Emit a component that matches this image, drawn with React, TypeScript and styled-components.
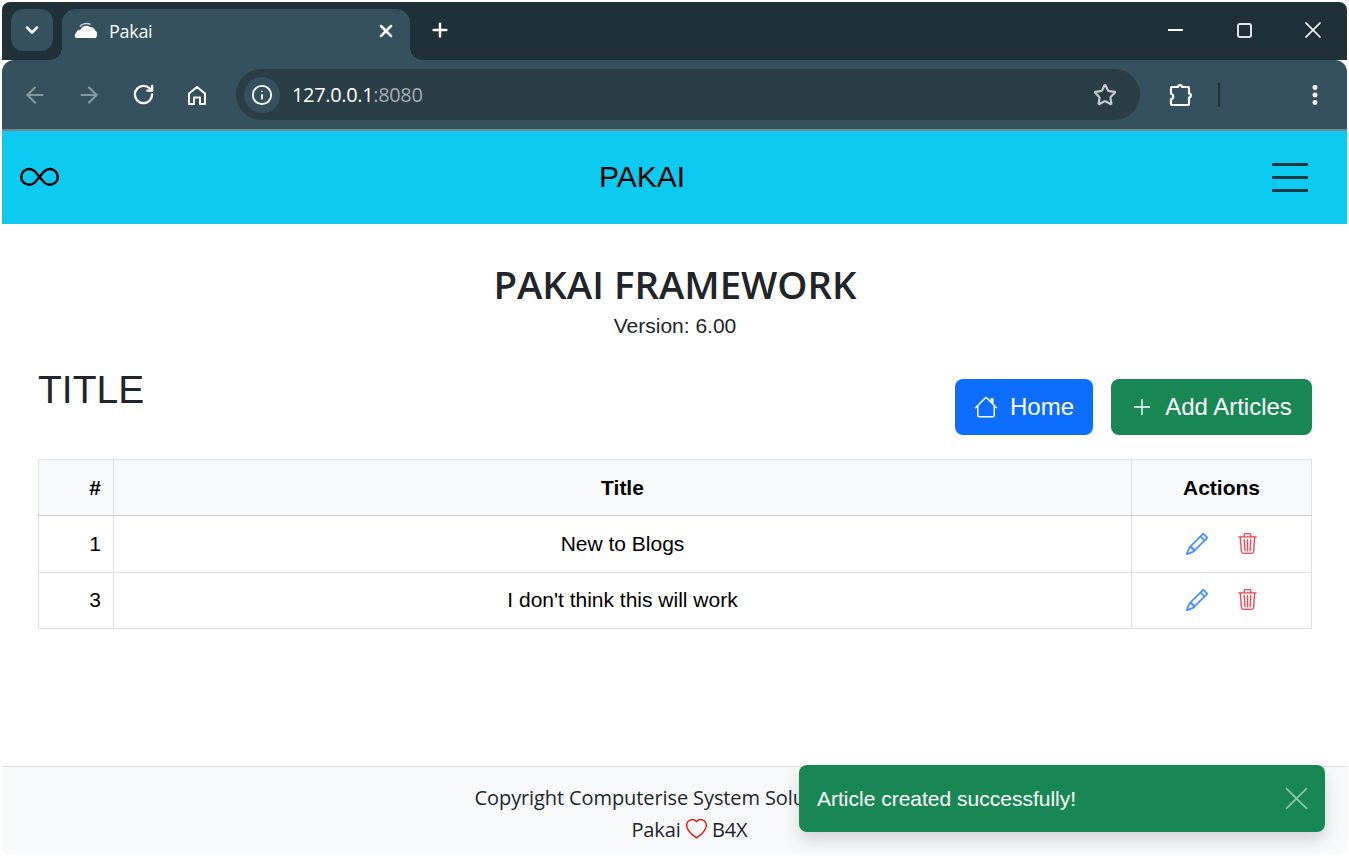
import React from "react";
import styled, { createGlobalStyle } from "styled-components";
import { ArrowLeft, ArrowRight, RotateCw, Info, Star, EllipsisVertical, ChevronDown, X, Plus } from "lucide-react";
import { BsHouse, BsPlusLg, BsPencil, BsTrash3, BsHeart, BsInfinity, BsXLg } from "react-icons/bs";

const Global = createGlobalStyle`
  html, body { margin: 0; padding: 0; background: #fff; }
  body { font-family: "Liberation Sans", Arial, sans-serif; overflow: hidden; }
  * { box-sizing: border-box; }
`;

const Page = styled.div`
  position: relative;
  width: 1349px;
  height: 856px;
  padding: 2px;
`;
const Win = styled.div`
  height: 852px;
  display: flex;
  flex-direction: column;
  border-radius: 8px;
  overflow: hidden;
  background: #fff;
`;
const TabStrip = styled.div`
  height: 58px;
  background: #1f3038;
  display: flex;
  align-items: flex-end;
  padding-left: 9px;
  color: #fff;
`;
const TabMenu = styled.div`
  width: 42px;
  height: 42px;
  margin-bottom: 9px;
  border-radius: 12px;
  background: #34515d;
  display: flex;
  align-items: center;
  justify-content: center;
`;
const Tab = styled.div`
  position: relative;
  width: 348px;
  height: 51px;
  margin-left: 9px;
  border-radius: 14px 14px 0 0;
  background: #34515d;
  display: flex;
  align-items: center;
  padding: 0 14px 8px 12px;
  font: 18px "Open Sans", sans-serif;
  letter-spacing: -0.3px;
  gap: 11px;
  &::before,
  &::after {
    content: "";
    position: absolute;
    bottom: 0;
    width: 12px;
    height: 12px;
  }
  &::before {
    left: -12px;
    background: radial-gradient(circle at 0 0, transparent 11.5px, #34515d 12px);
  }
  &::after {
    right: -12px;
    background: radial-gradient(circle at 100% 0, transparent 11.5px, #34515d 12px);
  }
`;
const TabLabel = styled.span`
  flex: 1;
`;
const NewTab = styled.div`
  width: 60px;
  height: 42px;
  margin-bottom: 9px;
  display: flex;
  align-items: center;
  justify-content: center;
`;
const WinControls = styled.div`
  margin-left: auto;
  align-self: flex-start;
  display: flex;
  padding-top: 8px;
`;
const WinBtn = styled.div`
  width: 69px;
  height: 40px;
  display: flex;
  align-items: center;
  justify-content: center;
`;
const MinLine = styled.div`
  width: 15px;
  height: 2px;
  margin-left: 2px;
  background: #fff;
`;
const MaxBox = styled.div`
  width: 15px;
  height: 15px;
  margin-left: 2px;
  border: 2px solid #e0e5e7;
  border-radius: 3px;
`;
const Toolbar = styled.div`
  height: 71px;
  background: #34515d;
  border-bottom: 2px solid #76858c;
  border-radius: 12px 12px 0 0;
  display: flex;
  align-items: center;
  padding: 0 5px 0 6px;
  color: #fff;
`;
const NavIcon = styled.div<{ $dim?: boolean }>`
  width: 54px;
  display: flex;
  justify-content: center;
  color: ${(p) => (p.$dim ? "#84989f" : "#fff")};
`;
const Omnibox = styled.div`
  width: 904px;
  height: 51px;
  margin-left: 12px;
  border-radius: 26px;
  background: #2b3d45;
  display: flex;
  align-items: center;
  padding: 0 23px 0 8px;
`;
const InfoChip = styled.div`
  width: 36px;
  height: 36px;
  border-radius: 50%;
  background: #34515d;
  display: flex;
  align-items: center;
  justify-content: center;
`;
const Url = styled.div`
  margin-left: 12px;
  flex: 1;
  font: 20px "Open Sans", sans-serif;
  letter-spacing: -0.35px;
  color: #fff;
`;
const UrlPort = styled.span`
  color: #a3aeb3;
`;
const ExtBtn = styled.div`
  margin-left: 28px;
  display: flex;
`;
const Divider = styled.div`
  width: 2px;
  height: 24px;
  background: #1f3038;
  margin-left: 24px;
`;
const ToolRight = styled.div`
  margin-left: auto;
  width: 54px;
  display: flex;
  justify-content: center;
`;
const Navbar = styled.nav`
  height: 93px;
  background: #0dcaf0;
  display: flex;
  align-items: center;
  justify-content: space-between;
  padding: 0 39px 0 18px;
  color: #000;
`;
const Brand = styled.div`
  font-size: 30px;
  color: #000;
  margin-right: 47px;
  padding-bottom: 2px;
`;
const Toggler = styled.div`
  width: 36px;
  display: flex;
  flex-direction: column;
  gap: 10.5px;
`;
const TogglerBar = styled.div`
  height: 2.5px;
  background: #1d3a42;
`;
const Main = styled.main`
  flex: 1;
  padding: 0 35px 0 36px;
`;
const Hero = styled.div`
  text-align: center;
  padding-top: 36px;
  color: #212529;
`;
const HeroTitle = styled.h2`
  margin: 0;
  font: 600 38.4px/48px "Open Sans", sans-serif;
`;
const Version = styled.div`
  margin-top: 3px;
  font-size: 21px;
  line-height: 30px;
`;
const TitleRow = styled.div`
  display: flex;
  align-items: flex-start;
  justify-content: space-between;
  margin-top: 25px;
`;
const PageTitle = styled.h1`
  margin: 0;
  font-weight: 400;
  font-size: 39px;
  line-height: 48px;
  color: #212529;
`;
const Actions = styled.div`
  display: flex;
  gap: 18px;
  padding-top: 13px;
`;
const Btn = styled.div<{ $bg: string; $w: number; $gap: number }>`
  width: ${(p) => p.$w}px;
  height: 56px;
  border-radius: 8px;
  background: ${(p) => p.$bg};
  color: #fff;
  font-size: 24px;
  display: flex;
  align-items: center;
  justify-content: center;
  gap: ${(p) => p.$gap}px;
`;
const Table = styled.table`
  width: 100%;
  margin-top: 24px;
  border-collapse: collapse;
  table-layout: fixed;
  font-size: 21px;
  color: #000;
`;
const Th = styled.th<{ $w?: number; $right?: boolean }>`
  ${(p) => (p.$w ? `width: ${p.$w}px;` : "")}
  height: 56px;
  padding: 0 12px;
  background: #f8f9fa;
  border: 1px solid #dee2e6;
  border-bottom-color: #c9cbcf;
  font-weight: 700;
  text-align: ${(p) => (p.$right ? "right" : "center")};
`;
const Td = styled.td<{ $right?: boolean }>`
  height: 56.5px;
  padding: 0 12px;
  border: 1px solid #dee2e6;
  text-align: ${(p) => (p.$right ? "right" : "center")};
`;
const RowIcons = styled.div`
  display: flex;
  justify-content: center;
  gap: 29px;
`;
const Footer = styled.footer`
  height: 88px;
  background: #f8f9fa;
  border-top: 1px solid #dee2e6;
  text-align: center;
  font: 20px/32px "Open Sans", sans-serif;
  letter-spacing: -0.1px;
  color: #212529;
  padding-top: 15px;
`;
const FooterLine = styled.div<{ $left?: number; $right?: number }>`
  padding-left: ${(p) => p.$left ?? 0}px;
  padding-right: ${(p) => p.$right ?? 0}px;
`;
const Toast = styled.div`
  position: absolute;
  right: 24px;
  bottom: 24px;
  width: 526px;
  height: 67px;
  border-radius: 8px;
  background: #198754;
  color: #fff;
  box-shadow: 0 8px 16px rgba(0, 0, 0, 0.15);
  display: flex;
  align-items: center;
  justify-content: space-between;
  padding: 0 14px 0 18px;
  font-size: 21px;
`;
const ToastClose = styled.div`
  display: flex;
  opacity: 0.5;
`;

const rows = [
  { id: 1, title: "New to Blogs" },
  { id: 3, title: "I don't think this will work" },
];

const Cloud = () => (
  <svg width="24" height="18" viewBox="0 0 24 18">
    <path d="M2 16c-1.500-1-1.800-4 .4-5.500C3 8 5 7.400 6.500 7.800 8 3.500 13 2.500 16 5c2-.5 4.500 1 5 3.500 2.200.5 3 4.500 1 7.500z" fill="#fff" />
    <path d="M6 4.500C8 1.500 13 .5 16.500 2.500" fill="none" stroke="#c6d3e6" strokeWidth="1.500" />
  </svg>
);
const ChromeHome = () => (
  <svg width="22" height="22" viewBox="0 0 22 22" fill="none" stroke="#fff" strokeWidth="2" strokeLinejoin="round">
    <path d="M3 9.500 11 3l8 6.500V20h-5v-6.500H8V20H3z" />
  </svg>
);
const Puzzle = () => (
  <svg width="26" height="26" viewBox="0 0 26 26" fill="none" stroke="#fff" strokeWidth="2.200" strokeLinejoin="round">
    <path d="M4 5h6c0-2.500 4-2.500 4 0h6a1 1 0 0 1 1 1v5.500c2.500 0 2.500 4 0 4V22a1 1 0 0 1-1 1H4a1 1 0 0 1-1-1v-5c3 0 3-5 0-5V6a1 1 0 0 1 1-1z" />
  </svg>
);

export default function App() {
  return (
    <Page>
      <Global />
      <Win>
        <TabStrip>
          <TabMenu><ChevronDown size={20} strokeWidth={3} /></TabMenu>
          <Tab>
            <Cloud />
            <TabLabel>Pakai</TabLabel>
            <X size={20} strokeWidth={3} />
          </Tab>
          <NewTab><Plus size={22} strokeWidth={2.6} /></NewTab>
          <WinControls>
            <WinBtn><MinLine /></WinBtn>
            <WinBtn><MaxBox /></WinBtn>
            <WinBtn><X size={28} strokeWidth={1.5} /></WinBtn>
          </WinControls>
        </TabStrip>
        <Toolbar>
          <NavIcon $dim><ArrowLeft size={26} strokeWidth={2} /></NavIcon>
          <NavIcon $dim><ArrowRight size={26} strokeWidth={2} /></NavIcon>
          <NavIcon><RotateCw size={23} strokeWidth={2.4} /></NavIcon>
          <NavIcon><ChromeHome /></NavIcon>
          <Omnibox>
            <InfoChip><Info size={22} strokeWidth={2} /></InfoChip>
            <Url>127.0.0.1<UrlPort>:8080</UrlPort></Url>
            <Star size={24} strokeWidth={2.2} color="#c4cbce" />
          </Omnibox>
          <ExtBtn><Puzzle /></ExtBtn>
          <Divider />
          <ToolRight><EllipsisVertical size={26} strokeWidth={2.6} /></ToolRight>
        </Toolbar>
        <Navbar>
          <BsInfinity size={39} />
          <Brand>PAKAI</Brand>
          <Toggler>
            <TogglerBar />
            <TogglerBar />
            <TogglerBar />
          </Toggler>
        </Navbar>
        <Main>
          <Hero>
            <HeroTitle>PAKAI FRAMEWORK</HeroTitle>
            <Version>Version: 6.00</Version>
          </Hero>
          <TitleRow>
            <PageTitle>TITLE</PageTitle>
            <Actions>
              <Btn $bg="#0d6efd" $w={138} $gap={12}><BsHouse size={24} />Home</Btn>
              <Btn $bg="#198754" $w={201} $gap={12}><BsPlusLg size={22} />Add Articles</Btn>
            </Actions>
          </TitleRow>
          <Table>
            <thead>
              <tr>
                <Th $w={75} $right>#</Th>
                <Th>Title</Th>
                <Th $w={180}>Actions</Th>
              </tr>
            </thead>
            <tbody>
              {rows.map((r) => (
                <tr key={r.id}>
                  <Td $right>{r.id}</Td>
                  <Td>{r.title}</Td>
                  <Td>
                    <RowIcons>
                      <BsPencil size={22} color="#3d8bfd" stroke="currentColor" strokeWidth={0.3} />
                      <BsTrash3 size={21} color="#e0525f" stroke="currentColor" strokeWidth={0.15} />
                    </RowIcons>
                  </Td>
                </tr>
              ))}
            </tbody>
          </Table>
        </Main>
        <Footer>
          <FooterLine $right={24}>Copyright Computerise System Solutions</FooterLine>
          <FooterLine $left={30}>
            Pakai <BsHeart size={21} color="#ff0000" style={{ verticalAlign: "-3px" }} /> B4X
          </FooterLine>
        </Footer>
      </Win>
      <Toast>
        Article created successfully!
        <ToastClose><BsXLg size={29} /></ToastClose>
      </Toast>
    </Page>
  );
}
